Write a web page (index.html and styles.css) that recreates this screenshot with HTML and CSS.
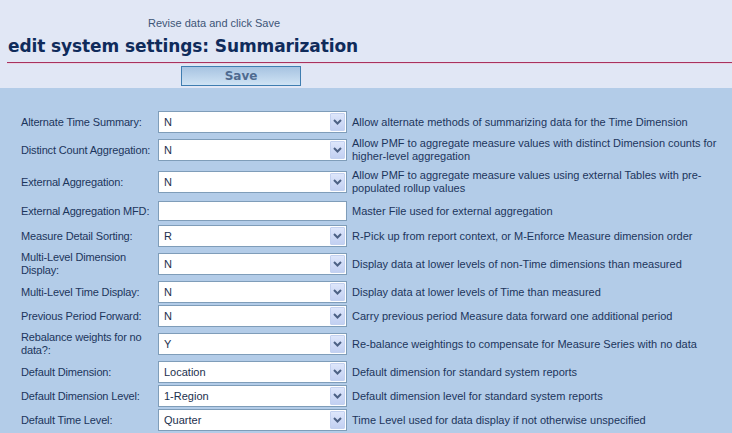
FILE: index.html
```html
<!DOCTYPE html>
<html lang="en">
<head>
  <meta charset="UTF-8" />
  <title>edit system settings: Summarization</title>
  <link rel="stylesheet" href="styles.css">
</head>
<body>
  <div class="header">
    <p class="hint">Revise data and click Save</p>
    <h1>edit system settings: Summarization</h1>
    <div class="rule"></div>
    <div class="actions">
      <button class="btn-save">Save</button>
    </div>
  </div>

  <div class="content">
    <div class="settings">
      <label>Alternate Time Summary:</label>
      <div class="combo"><span class="combo-value">N</span><span class="combo-btn"></span></div>
      <div class="desc">Allow alternate methods of summarizing data for the Time Dimension</div>

      <label>Distinct Count Aggregation:</label>
      <div class="combo"><span class="combo-value">N</span><span class="combo-btn"></span></div>
      <div class="desc">Allow PMF to aggregate measure values with distinct Dimension counts for higher-level aggregation</div>

      <label>External Aggregation:</label>
      <div class="combo"><span class="combo-value">N</span><span class="combo-btn"></span></div>
      <div class="desc">Allow PMF to aggregate measure values using external Tables with pre-populated rollup values</div>

      <label>External Aggregation MFD:</label>
      <input class="text-input" type="text" value="">
      <div class="desc">Master File used for external aggregation</div>

      <label>Measure Detail Sorting:</label>
      <div class="combo"><span class="combo-value">R</span><span class="combo-btn"></span></div>
      <div class="desc">R-Pick up from report context, or M-Enforce Measure dimension order</div>

      <label>Multi-Level Dimension Display:</label>
      <div class="combo"><span class="combo-value">N</span><span class="combo-btn"></span></div>
      <div class="desc">Display data at lower levels of non-Time dimensions than measured</div>

      <label>Multi-Level Time Display:</label>
      <div class="combo"><span class="combo-value">N</span><span class="combo-btn"></span></div>
      <div class="desc">Display data at lower levels of Time than measured</div>

      <label>Previous Period Forward:</label>
      <div class="combo"><span class="combo-value">N</span><span class="combo-btn"></span></div>
      <div class="desc">Carry previous period Measure data forward one additional period</div>

      <label>Rebalance weights for no data?:</label>
      <div class="combo"><span class="combo-value">Y</span><span class="combo-btn"></span></div>
      <div class="desc">Re-balance weightings to compensate for Measure Series with no data</div>

      <label>Default Dimension:</label>
      <div class="combo"><span class="combo-value">Location</span><span class="combo-btn"></span></div>
      <div class="desc">Default dimension for standard system reports</div>

      <label>Default Dimension Level:</label>
      <div class="combo"><span class="combo-value">1-Region</span><span class="combo-btn"></span></div>
      <div class="desc">Default dimension level for standard system reports</div>

      <label>Default Time Level:</label>
      <div class="combo"><span class="combo-value">Quarter</span><span class="combo-btn"></span></div>
      <div class="desc">Time Level used for data display if not otherwise unspecified</div>
    </div>
  </div>
</body>
</html>
```

FILE: styles.css
```css
body {
  margin: 0;
  padding: 0;
  font-family: 'Liberation Sans', Arial, sans-serif;
  font-size: 11px;
  color: #1c355c;
  background-color: #b3cce8;
}

.header {
  background-color: #e1e7f5;
  padding: 17px 0 2px 0;
}

.hint {
  margin: 0 0 0 148px;
  font-size: 11px;
  line-height: 13px;
  color: #3d5577;
}

h1 {
  margin: 4px 0 0 8px;
  font-family: 'DejaVu Sans', Verdana, sans-serif;
  font-size: 17px;
  font-weight: bold;
  line-height: 24px;
  color: #0f2b5b;
  letter-spacing: -0.1px;
}

.rule {
  margin: 4px 0 0 7px;
  height: 1px;
  background-color: #a8325e;
  border-bottom: 1px solid #e8d4e4;
}

.actions {
  padding: 2px 0 0 181px;
}

.btn-save {
  display: block;
  width: 120px;
  height: 20px;
  padding: 0;
  border: 1px solid #3f7db0;
  background: linear-gradient(#a7c3e1, #cfe3f4);
  font-family: 'DejaVu Sans', Verdana, sans-serif;
  font-size: 12px;
  font-weight: bold;
  color: #4f6b90;
  cursor: pointer;
}

.content {
  padding: 22px 0 10px 21px;
}

.settings {
  display: grid;
  grid-template-columns: 137px 189px 1fr;
  align-items: center;
}

.settings label,
.settings .desc {
  line-height: 13px;
  padding: 3px 0;
  min-height: 18px;
  display: flex;
  align-items: center;
}

.settings label {
  letter-spacing: -0.15px;
}

.settings .desc {
  padding-left: 5px;
  padding-right: 10px;
}

.combo {
  position: relative;
  height: 20px;
  border: 1px solid #7f9db9;
  background-color: #fff;
  display: flex;
  align-items: center;
}

.combo-value {
  padding-left: 5px;
  color: #1c2f4d;
}

.combo-btn {
  position: absolute;
  top: 1px;
  right: 1px;
  width: 15px;
  height: 18px;
  box-sizing: border-box;
  border: 1px solid #c3d1f0;
  border-radius: 1px;
  background-image: url("data:image/svg+xml,%3Csvg xmlns='http://www.w3.org/2000/svg' width='13' height='16'%3E%3Cpath d='M3 6 L6.5 9.5 L10 6' fill='none' stroke='%234d6185' stroke-width='2'/%3E%3C/svg%3E"), linear-gradient(#dde6fb, #c2d0f2);
  background-repeat: no-repeat;
}

.text-input {
  height: 20px;
  box-sizing: border-box;
  margin: 3px 0;
  border: 1px solid #7f9db9;
  background-color: #fff;
  width: 189px;
}
```
